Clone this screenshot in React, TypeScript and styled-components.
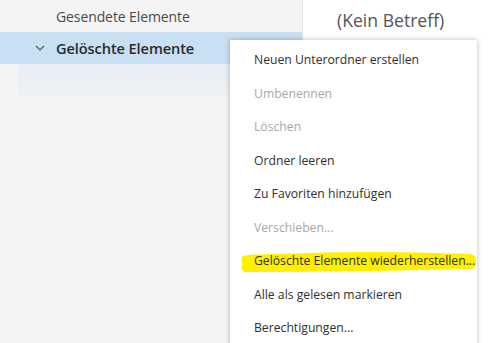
import React from "react";
import styled, { createGlobalStyle } from "styled-components";

const GlobalStyle = createGlobalStyle`
  html, body {
    margin: 0;
    padding: 0;
    overflow: hidden;
    background: #ffffff;
  }
  body {
    font-family: "Open Sans", "Noto Sans", "Liberation Sans", sans-serif;
  }
`;

const Screen = styled.div`
  position: relative;
  display: flex;
  width: 490px;
  height: 343px;
  overflow: hidden;
`;

const FolderPane = styled.div`
  width: 302px;
  flex: none;
  background: #f4f4f4;
  border-right: 1px solid #e3e3e3;
  display: flex;
  flex-direction: column;
`;

const FolderRow = styled.div<{ $selected?: boolean }>`
  height: 32px;
  display: flex;
  align-items: center;
  padding-left: ${(p) => (p.$selected ? "34px" : "56px")};
  gap: 10px;
  background: ${(p) => (p.$selected ? "#c8dff4" : "transparent")};
  color: ${(p) => (p.$selected ? "#2b2b2b" : "#4a4a4a")};
  font-size: ${(p) => (p.$selected ? "14.6px" : "14px")};
  font-weight: ${(p) => (p.$selected ? 600 : 400)};
  letter-spacing: -0.1px;
`;

const Chevron = styled.svg`
  width: 12px;
  height: 12px;
  flex: none;
`;

const Ghost = styled.div`
  margin-left: 18px;
  height: 62px;
  background: linear-gradient(
    to bottom,
    #e8eef5 0%,
    #eef1f4 45%,
    #f5f4f2 60%,
    #f4f4f4 100%
  );
`;

const ReadingPane = styled.div`
  flex: 1;
  background: #ffffff;
  padding: 8px 0 0 34px;
`;

const Subject = styled.div`
  font-size: 17.6px;
  color: #555555;
  font-weight: 400;
`;

const Menu = styled.div`
  position: absolute;
  left: 230px;
  top: 40px;
  width: 247px;
  height: 320px;
  background: #ffffff;
  box-shadow: 0 0 5px rgba(0, 0, 0, 0.28);
  padding-top: 3px;
  box-sizing: border-box;
`;

const Item = styled.div<{ $disabled?: boolean }>`
  position: relative;
  height: 33.5px;
  display: flex;
  align-items: center;
  padding-left: 24px;
  font-size: 12.2px;
  white-space: nowrap;
  color: ${(p) => (p.$disabled ? "#a8a8a8" : "#2f2f2f")};
`;

const Marker = styled.svg`
  position: absolute;
  left: 11px;
  top: 6px;
  width: 236px;
  height: 26px;
`;

const Label = styled.span`
  position: relative;
`;

const items: { text: string; disabled?: boolean; marked?: boolean }[] = [
  { text: "Neuen Unterordner erstellen" },
  { text: "Umbenennen", disabled: true },
  { text: "Löschen", disabled: true },
  { text: "Ordner leeren" },
  { text: "Zu Favoriten hinzufügen" },
  { text: "Verschieben...", disabled: true },
  { text: "Gelöschte Elemente wiederherstellen...", marked: true },
  { text: "Alle als gelesen markieren" },
  { text: "Berechtigungen..." },
];

export default function App() {
  return (
    <>
      <GlobalStyle />
      <Screen>
        <FolderPane>
          <FolderRow>Gesendete Elemente</FolderRow>
          <FolderRow $selected>
            <Chevron viewBox="0 0 12 12">
              <path d="M2 4 L6 8 L10 4" fill="none" stroke="#555" strokeWidth="1.2" />
            </Chevron>
            Gelöschte Elemente
          </FolderRow>
          <Ghost />
        </FolderPane>
        <ReadingPane>
          <Subject>(Kein Betreff)</Subject>
        </ReadingPane>
        <Menu>
          {items.map((it) => (
            <Item key={it.text} $disabled={it.disabled}>
              {it.marked && (
                <Marker viewBox="0 0 236 26" preserveAspectRatio="none">
                  <path
                    d="M2 6 Q6 4 40 4 Q120 0 230 4 Q236 6 235 12 Q236 19 228 19 Q120 22 4 22 Q0 22 1 14 Q0 7 2 6 Z"
                    fill="#fff000"
                  />
                </Marker>
              )}
              <Label>{it.text}</Label>
            </Item>
          ))}
        </Menu>
      </Screen>
    </>
  );
}
